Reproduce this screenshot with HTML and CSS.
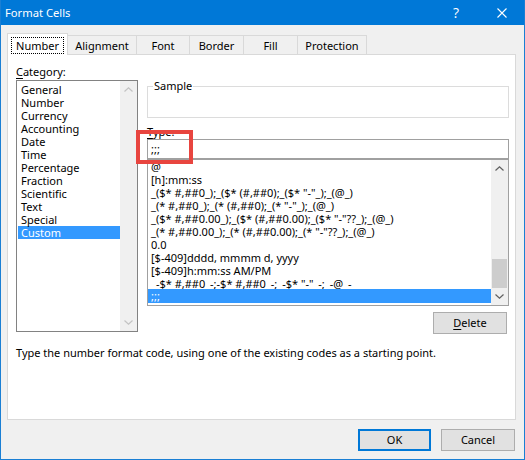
FILE: index.html
```html
<!DOCTYPE html>
<html>
<head>
<meta charset="utf-8">
<link rel="stylesheet" href="styles.css">
</head>
<body>
<div class="window">
  <div class="titlebar">
    <span class="title">Format Cells</span>
    <span class="capbtn help">?</span>
    <span class="capbtn close"><svg width="10" height="10" viewBox="0 0 10 10"><path d="M0.5 0.5 L9.5 9.5 M9.5 0.5 L0.5 9.5" stroke="#fff" stroke-width="1.1" fill="none"/></svg></span>
  </div>
  <div class="content">
    <div class="tabs">
      <div class="tab active t-number"><span class="focus">Number</span></div>
      <div class="tab t-align">Alignment</div>
      <div class="tab t-font">Font</div>
      <div class="tab t-border">Border</div>
      <div class="tab t-fill">Fill</div>
      <div class="tab t-prot">Protection</div>
    </div>
    <div class="panel">
      <div class="columns">
        <div class="left">
          <div class="label"><u>C</u>ategory:</div>
          <div class="listbox cat">
            <div class="items">
              <div class="item">General</div>
              <div class="item">Number</div>
              <div class="item">Currency</div>
              <div class="item">Accounting</div>
              <div class="item">Date</div>
              <div class="item">Time</div>
              <div class="item">Percentage</div>
              <div class="item">Fraction</div>
              <div class="item">Scientific</div>
              <div class="item">Text</div>
              <div class="item">Special</div>
              <div class="item selected">Custom</div>
            </div>
            <div class="vscroll disabled">
              <div class="arrow"><svg width="9" height="5" viewBox="0 0 9 5"><path d="M0.5 4.5 L4.5 0.8 L8.5 4.5" stroke="currentColor" stroke-width="1.2" fill="none"/></svg></div>
              <div class="track"></div>
              <div class="arrow"><svg width="9" height="5" viewBox="0 0 9 5"><path d="M0.5 0.5 L4.5 4.2 L8.5 0.5" stroke="currentColor" stroke-width="1.2" fill="none"/></svg></div>
            </div>
          </div>
        </div>
        <div class="right">
          <div class="sample"><span class="legend">Sample</span></div>
          <div class="label type-label"><u>T</u>ype:</div>
          <div class="type-input">;;;</div>
          <div class="listbox types">
            <div class="items">
              <div class="item">@</div>
              <div class="item">[h]:mm:ss</div>
              <div class="item">_($* #,##0_);_($* (#,##0);_($* "-"_);_(@_)</div>
              <div class="item">_(* #,##0_);_(* (#,##0);_(* "-"_);_(@_)</div>
              <div class="item">_($* #,##0.00_);_($* (#,##0.00);_($* "-"??_);_(@_)</div>
              <div class="item">_(* #,##0.00_);_(* (#,##0.00);_(* "-"??_);_(@_)</div>
              <div class="item">0.0</div>
              <div class="item">[$-409]dddd, mmmm d, yyyy</div>
              <div class="item">[$-409]h:mm:ss AM/PM</div>
              <div class="item clipped">_-$* #,##0_-;-$* #,##0_-;_-$* "-"_-;_-@_-</div>
              <div class="item selected">;;;</div>
            </div>
            <div class="vscroll">
              <div class="arrow"><svg width="9" height="5" viewBox="0 0 9 5"><path d="M0.5 4.5 L4.5 0.8 L8.5 4.5" stroke="currentColor" stroke-width="1.2" fill="none"/></svg></div>
              <div class="track"><div class="thumb"></div></div>
              <div class="arrow"><svg width="9" height="5" viewBox="0 0 9 5"><path d="M0.5 0.5 L4.5 4.2 L8.5 0.5" stroke="currentColor" stroke-width="1.2" fill="none"/></svg></div>
            </div>
          </div>
          <div class="delete-row"><button class="btn delete"><u>D</u>elete</button></div>
        </div>
      </div>
      <p class="desc">Type the number format code, using one of the existing codes as a starting point.</p>
      <div class="highlight-box"></div>
    </div>
    <div class="buttons">
      <button class="btn ok">OK</button>
      <button class="btn cancel">Cancel</button>
    </div>
  </div>
</div>
</body>
</html>
```

FILE: styles.css
```css
* { box-sizing: border-box; }
body {
  margin: 0;
  font-family: "Noto Sans", "Open Sans", sans-serif;
  font-size: 11px;
  color: #000;
}
u { text-decoration: underline; text-underline-offset: 2px; }

.window {
  width: 525px;
  height: 460px;
  border: 1px solid #1a7fd4;
  border-top: none;
  background: #f0f0f0;
  display: flex;
  flex-direction: column;
}

.titlebar {
  height: 25px;
  background: #0078d7;
  color: #fff;
  display: flex;
  align-items: center;
  padding-left: 4px;
  flex: none;
}
.title { flex: 1; font-size: 11.2px; line-height: 16px; }
.capbtn {
  width: 46px;
  height: 25px;
  display: flex;
  align-items: center;
  justify-content: center;
}
.help { font-size: 14px; font-family: "Open Sans", sans-serif; }
.close { width: 45px; }

.content {
  padding: 8px 8px 0 6px;
  flex: 1;
  display: flex;
  flex-direction: column;
}

.tabs {
  display: flex;
  align-items: flex-end;
  height: 21px;
  position: relative;
  z-index: 1;
}
.tab {
  height: 19px;
  border: 1px solid #d9d9d9;
  border-bottom: none;
  margin-left: -1px;
  display: flex;
  align-items: center;
  justify-content: center;
  line-height: 15px;
  padding-top: 1px;
  background: #f0f0f0;
}
.tab.active {
  height: 22px;
  margin-left: 0;
  margin-bottom: -1px;
  background: #fff;
  padding-top: 0;
}
.focus {
  border: 1px dotted #000;
  padding: 0 4px;
  line-height: 15px;
  height: 17px;
  display: flex;
  align-items: center;
  margin-top: 1px;
}
.t-number { width: 61px; }
.t-align { width: 70px; }
.t-font { width: 54px; }
.t-border { width: 55px; }
.t-fill { width: 55px; }
.t-prot { width: 70px; }

.panel {
  height: 366px;
  border: 1px solid #d9d9d9;
  background: #fff;
  padding: 9px 6px 0 8px;
  position: relative;
  flex: none;
}

.columns {
  display: flex;
  gap: 9px;
}
.left { width: 122px; }
.right { width: 362px; }

.label { line-height: 16px; height: 16px; }

.listbox {
  border: 1px solid #828282;
  display: flex;
  background: #fff;
}
.listbox .items {
  flex: 1;
  overflow: hidden;
  padding-top: 2px;
}
.item {
  height: 13px;
  line-height: 13px;
  padding-left: 3px;
  white-space: nowrap;
}
.item.selected {
  background: #3399ff;
  color: #fff;
}
.cat { height: 252px; }
.cat .item { margin-left: 1px; }

.vscroll {
  width: 17px;
  background: #f0f0f0;
  display: flex;
  flex-direction: column;
  color: #606060;
}
.vscroll.disabled { color: #c3c3c3; }
.arrow {
  height: 17px;
  display: flex;
  align-items: center;
  justify-content: center;
  flex: none;
}
.track { flex: 1; position: relative; }
.thumb {
  position: absolute;
  left: 1px;
  right: 1px;
  top: 82px;
  height: 29px;
  background: #cdcdcd;
}

.sample {
  margin-top: 22px;
  height: 32px;
  border: 1px solid #dcdcdc;
}
.legend {
  display: block;
  width: fit-content;
  margin: -9px 0 0 5px;
  padding: 0 1px;
  background: #fff;
  line-height: 16px;
}

.type-label { margin-top: 6px; line-height: 15px; height: 15px; }
.type-input {
  height: 20px;
  border: 1px solid #a0a0a0;
  padding-left: 3px;
  line-height: 17px;
}
.types {
  height: 147px;
  border-color: #a0a0a0;
}
.types .items { padding-top: 0; }
.types .item { padding-left: 3px; }
.types .item.clipped { height: 12px; overflow: hidden; }
.types .item.selected { height: 14px; }

.delete-row {
  display: flex;
  justify-content: flex-end;
  margin-top: 6px;
  padding-right: 2px;
}
.btn {
  font-family: inherit;
  font-size: 11px;
  height: 22px;
  background: #e1e1e1;
  border: 1px solid #adadad;
  padding: 0;
  color: #000;
  line-height: 18px;
}
.delete { width: 74px; }

.desc {
  margin: 11px 0 0;
  line-height: 16px;
}

.highlight-box {
  position: absolute;
  left: 128px;
  top: 75px;
  width: 57px;
  height: 34px;
  border: 4px solid #e8453f;
}

.buttons {
  display: flex;
  justify-content: flex-end;
  gap: 10px;
  margin-top: 9px;
  padding-right: 1px;
}
.ok { width: 73px; border: 2px solid #0078d7; }
.cancel { width: 74px; }
```
